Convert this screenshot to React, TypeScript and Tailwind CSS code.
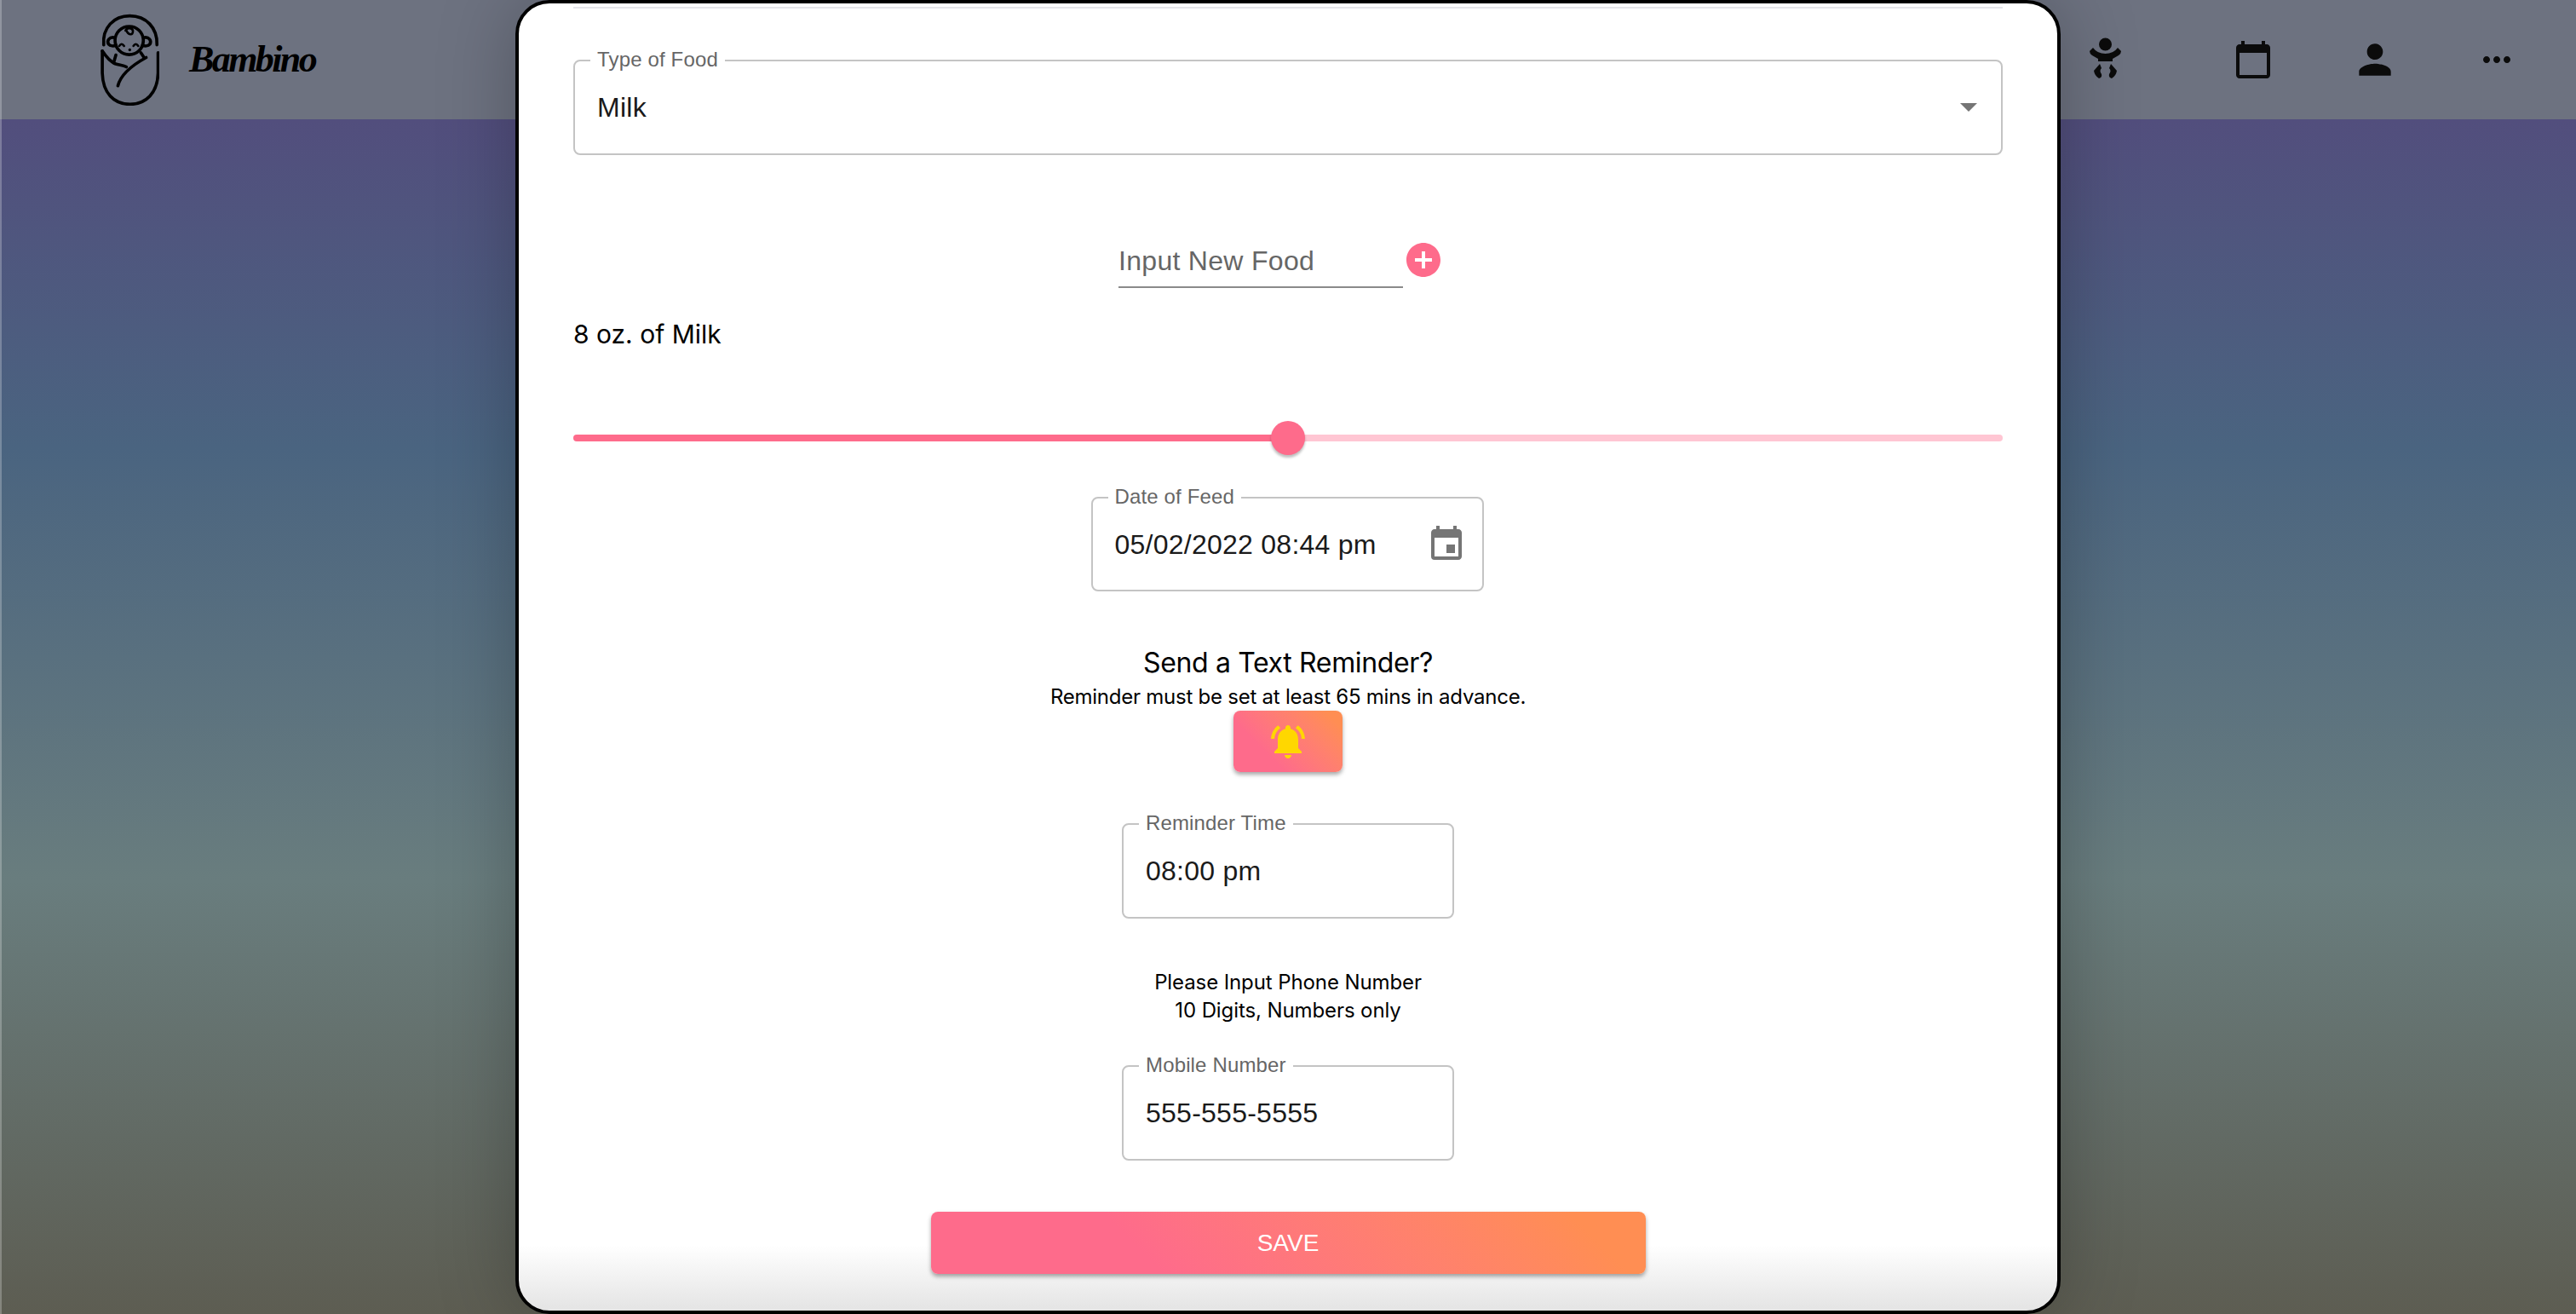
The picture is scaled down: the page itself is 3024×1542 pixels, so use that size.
import { MdAddCircle, MdCalendarToday, MdEvent, MdMoreHoriz, MdNotificationsActive, MdPerson } from "react-icons/md"

const FIELD_FONT = "font-['Liberation_Sans',Arial,sans-serif]"
const BODY_FONT = "font-['Inter','Noto_Sans',sans-serif]"

function BabyLogo() {
  return (
    <svg viewBox="85 40 205 325" className="w-[69px] h-[108px] shrink-0" fill="none" stroke="#000" strokeWidth="11" strokeLinecap="round" strokeLinejoin="round">
      <path d="M95 150C90 90 130 48 187 48C245 48 285 90 283 150" />
      <path d="M90 172V250C92 320 130 360 188 360C245 360 285 320 287 250V178" />
      <path d="M90 172C105 195 120 210 135 217C150 222 165 222 175 228" />
      <circle cx="185" cy="135" r="50" />
      <path d="M145 295C155 255 190 225 245 195" />
      <path d="M138 186L130 214M226 178L238 196" />
      <path d="M135 125C115 120 105 135 112 148C118 155 130 155 138 152" />
      <path d="M235 125C255 120 265 135 258 148C252 155 240 155 232 152" />
      <path d="M175 98C180 115 200 120 198 100C195 88 175 90 172 100" strokeWidth="8" />
      <path d="M150 154Q158 141 167 154M200 154Q208 141 217 154" strokeWidth="8" />
      <circle cx="187" cy="168" r="5" fill="#000" stroke="none" />
    </svg>
  )
}

function BabyIcon() {
  return (
    <svg viewBox="0 0 38 48" className="w-[38px] h-[48px] -mt-1" fill="#0b0b0b">
      <circle cx="18.5" cy="8" r="7.5" />
      <path d="M4 12L0 16Q0 19 3 21L10 25V28H27V25L34 21Q37 19 37 16L33 12Q28 19 18.5 19Q9 19 4 12Z" />
      <path d="M12 31L5 39Q6 45 11 48Q15 47 14 43Q11 39 14 36Z" />
      <path d="M25 31L32 39Q31 45 26 48Q22 47 23 43Q26 39 23 36Z" />
    </svg>
  )
}

function OutlinedField({ label, value, width, height = "h-[112px]", right }: { label: string; value: string; width: string; height?: string; right?: React.ReactNode }) {
  return (
    <div className={`relative ${width} ${height} border-2 border-[#c4c4c4] rounded-lg flex items-center justify-between pl-[26px] pr-[24px] ${FIELD_FONT}`}>
      <span className="absolute left-[18px] -top-[17px] bg-white px-[8px] text-[24px] leading-[30px] tracking-[0.15px] text-[#666666]">{label}</span>
      <span className="text-[32px] tracking-[0.25px] text-[#1a1a1a]">{value}</span>
      {right}
    </div>
  )
}

export default function App() {
  return (
    <div className="relative w-full h-[1542px] overflow-hidden bg-[linear-gradient(180deg,#524e7d_140px,#4a6480_525px,#697d7e_1034px,#5d5d52_1542px)]">
      {/* Navbar */}
      <nav className="h-[140px] bg-[#6d7280] flex items-center justify-between pl-[118px] pr-[69px]">
        <div className="flex items-center gap-[35px]">
          <BabyLogo />
          <span className="font-['Liberation_Serif',serif] italic font-bold text-[44px] tracking-[-2.6px] text-black">Bambino</span>
        </div>
        <div className="flex items-center gap-[91px] text-[#0b0b0b]">
          <div className="mr-[39px]">
            <BabyIcon />
          </div>
          <MdCalendarToday className="w-12 h-12" />
          <MdPerson className="w-14 h-14" />
          <MdMoreHoriz className="w-12 h-12" />
        </div>
      </nav>

      {/* Window edge */}
      <div className="absolute left-0 inset-y-0 w-[2px] bg-white/25" />

      {/* Feeding modal */}
      <div className="absolute inset-0 flex justify-center">
        <div className={`w-[1814px] h-[1542px] border-4 border-black rounded-[40px] px-16 bg-linear-to-b from-white from-[95%] to-[#e4e4e4] shadow-[0_0_90px_rgba(0,0,0,0.25)] ${BODY_FONT}`}>
          <div className="mt-1 h-[2px] bg-[#e5e5ea]" />

          <div className="mt-[60px]">
            <OutlinedField
              label="Type of Food"
              value="Milk"
              width="w-full"
              right={<span className="w-0 h-0 border-x-[10px] border-x-transparent border-t-[10px] border-t-[#757575] mr-[4px]" />}
            />
          </div>

          <div className="mt-[98px] flex justify-center items-center mr-[16px]">
            <div className={`w-[334px] h-[58px] border-b-2 border-[#8a8a8a] flex items-center pb-1 text-[32px] tracking-[0.3px] text-[#666666] ${FIELD_FONT}`}>
              Input New Food
            </div>
            <MdAddCircle className="w-12 h-12 text-[#fe6b8b] -mt-[8px]" />
          </div>

          <div className="mt-[34px] text-[30px] leading-[40px] text-black">8 oz. of Milk</div>

          <div className="mt-[82px] h-10 flex items-center">
            <div className="h-2 w-1/2 bg-[#fe6b8b] rounded-l-full" />
            <div className="relative h-2 w-1/2 bg-[#ffc6d3] rounded-r-full">
              <span className="absolute -left-5 -top-4 w-10 h-10 rounded-full bg-[#fe6b8b] shadow-[0_3px_3px_rgba(0,0,0,0.25)]" />
            </div>
          </div>

          <div className="mt-[49px] flex justify-center -ml-[2px]">
            <OutlinedField
              label="Date of Feed"
              value="05/02/2022 08:44 pm"
              width="w-[461px]"
              height="h-[111px]"
              right={<MdEvent className="w-12 h-12 text-[#757575] -mr-[6px]" />}
            />
          </div>

          <div className="mt-[64px] text-center text-[32px] leading-[40px] tracking-[-0.35px] text-black">Send a Text Reminder?</div>
          <div className="mt-[6px] text-center text-[24px] leading-[28px] tracking-[-0.24px] text-black">Reminder must be set at least 65 mins in advance.</div>

          <div className="mt-[2px] flex justify-center">
            <button className="w-32 h-[72px] rounded-lg flex items-center justify-center bg-linear-45 from-[#fe6b8b] from-30% to-[#ff8e53] to-90% shadow-[0_3px_5px_rgba(0,0,0,0.35)]">
              <MdNotificationsActive className="w-12 h-12 text-[#ffd700]" />
            </button>
          </div>

          <div className="mt-[60px] flex justify-center">
            <OutlinedField label="Reminder Time" value="08:00 pm" width="w-[390px]" />
          </div>

          <div className="mt-[58px] text-center text-[24px] leading-[33px] tracking-[-0.1px] text-black">
            <div>Please Input Phone Number</div>
            <div>10 Digits, Numbers only</div>
          </div>

          <div className="mt-[48px] flex justify-center">
            <OutlinedField label="Mobile Number" value="555-555-5555" width="w-[390px]" />
          </div>

          <div className="mt-[60px] flex justify-center">
            <button className={`w-[839px] h-[73px] rounded-lg text-white text-[28px] bg-linear-45 from-[#fe6b8b] from-30% to-[#ff8e53] to-90% shadow-[0_3px_5px_rgba(0,0,0,0.35)] ${FIELD_FONT}`}>
              SAVE
            </button>
          </div>
        </div>
      </div>
    </div>
  )
}
